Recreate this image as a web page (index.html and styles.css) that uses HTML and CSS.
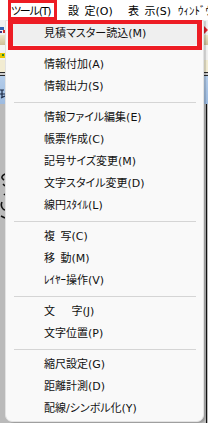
FILE: index.html
```html
<!DOCTYPE html>
<html lang="ja">
<head>
<meta charset="utf-8">
<title>ツールメニュー</title>
<link rel="stylesheet" href="styles.css">
</head>
<body>
<div class="app">
  <div class="menubar">
    <span class="mb mb-tool">ツール(T)</span>
    <span class="mb mb-set">設&#x2002;定(O)</span>
    <span class="mb mb-view">表&#x2002;示(S)</span>
    <span class="mb mb-win">ｳｨﾝﾄﾞｳ(W)</span>
  </div>
  <div class="tb tb1">
    <svg class="ico" width="6" height="8" viewBox="0 0 6 8"><rect x="0" y="1" width="4" height="3" fill="#2f5fb3"/><rect x="3" y="4" width="3" height="3" fill="#d03030"/><rect x="0" y="5" width="2" height="2" fill="#3a3a8a"/></svg>
    <svg class="arrow" width="4" height="8" viewBox="0 0 4 8"><path d="M0 0 L4 4 L0 8 Z" fill="#e0202a"/></svg>
  </div>
  <div class="tb tb2"></div>
  <div class="tb tb3"></div>
  <div class="tb tb4">
    <svg class="ico" width="6" height="7" viewBox="0 0 6 7"><rect x="0" y="1" width="5" height="5" fill="#e8c800"/><rect x="2" y="2" width="2" height="2" fill="#2a8a2a"/></svg>
  </div>
  <div class="tb tb5"></div>
  <div class="dbl"></div>
  <div class="band">
    <svg class="glyph" width="6" height="12" viewBox="0 0 6 12"><path d="M0 2 H4 M2 2 V10 M0 6 H5 M1 10 L5 8" stroke="#1c2a44" stroke-width="1.2" fill="none"/></svg>
  </div>
  <div class="canvas">
    <svg class="stroke" width="6" height="50" viewBox="0 0 6 50"><path d="M5 2 C1 4 1 6 4 8 M3 12 L5 14 M4 22 L5 23 M2 30 C0 34 3 38 5 38 M1 44 L5 46" stroke="#111" stroke-width="1.6" fill="none"/></svg>
    <div class="rline"></div>
  </div>
</div>

<div class="dropdown">
  <div class="item hot">見積マスター読込(M)</div>
  <div class="sep"></div>
  <div class="item">情報付加(A)</div>
  <div class="item">情報出力(S)</div>
  <div class="sep"></div>
  <div class="item">情報ファイル編集(E)</div>
  <div class="item">帳票作成(C)</div>
  <div class="item">記号サイズ変更(M)</div>
  <div class="item">文字スタイル変更(D)</div>
  <div class="item">線円ｽﾀｲﾙ(L)</div>
  <div class="sep"></div>
  <div class="item">複&#x2002;写(C)</div>
  <div class="item">移&#x2002;動(M)</div>
  <div class="item">ﾚｲﾔｰ操作(V)</div>
  <div class="sep"></div>
  <div class="item">文&#x2002;&#x2002;&#x2002;字(J)</div>
  <div class="item">文字位置(P)</div>
  <div class="sep"></div>
  <div class="item">縮尺設定(G)</div>
  <div class="item">距離計測(D)</div>
  <div class="item">配線/シンボル化(Y)</div>
</div>

<div class="mark mark-tool"></div>
<div class="mark mark-item"></div>
</body>
</html>
```

FILE: styles.css
```css
html, body {
  margin: 0;
  padding: 0;
}
body {
  width: 208px;
  height: 423px;
  overflow: hidden;
  position: relative;
  font-family: "DejaVu Sans", "Noto Sans CJK JP", sans-serif;
  font-size: 11px;
  font-feature-settings: "palt";
  color: #000;
  background: #b9b9b9;
}

.app {
  display: flex;
  flex-direction: column;
  height: 423px;
}

.menubar {
  height: 20px;
  flex: none;
  background: #fff;
  display: flex;
  white-space: nowrap;
  overflow: hidden;
  padding-left: 11px;
}
.mb {
  flex: none;
  line-height: 23px;
}
.mb-tool { width: 57px; letter-spacing: -1.2px; }
.mb-set { width: 60px; }
.mb-view { width: 50px; }

.tb {
  flex: none;
  display: flex;
  align-items: center;
  justify-content: space-between;
}
.tb1 {
  height: 15px;
  background: #f0f0f0;
  align-items: flex-end;
  padding-bottom: 1px;
  box-sizing: border-box;
}
.tb2 {
  height: 10px;
  background: linear-gradient(#ece4c8, #cfc09a);
}
.tb3 {
  height: 5px;
  background: #f4f4f4;
}
.tb4 {
  height: 10px;
  background: #f0f0f0;
}
.tb5 {
  height: 12px;
  background: #f2ecd2;
}
.dbl {
  flex: none;
  height: 2px;
  border-top: 1px solid #2a2a2a;
  border-bottom: 1px solid #2a2a2a;
  background: #cfcfcf;
}
.band {
  flex: none;
  height: 28px;
  background: linear-gradient(#b4cdea, #9dbbe0);
  display: flex;
  align-items: flex-end;
  padding-bottom: 4px;
  box-sizing: border-box;
}
.canvas {
  flex: 1;
  background: #bababa;
  display: flex;
  justify-content: space-between;
  align-items: flex-start;
}
.canvas .stroke {
  margin-top: 68px;
}
.rline {
  width: 1px;
  height: 100%;
  margin-right: 1px;
  background: #111;
}

/* dropdown menu overlay */
.dropdown {
  position: absolute;
  left: 5px;
  top: 20px;
  width: 199px;
  height: 402px;
  box-sizing: border-box;
  background: #f9f9f9;
  border: 1px solid #e2e2e2;
  border-radius: 0 0 7px 7px;
  box-shadow: 2px 1px 1px rgba(0, 0, 0, 0.16);
  padding-top: 2px;
  white-space: nowrap;
}
.item {
  height: 22px;
  line-height: 22px;
  padding-left: 38px;
  margin: 0 4px 0 0;
  color: #111;
}
.item.hot {
  background: #efefef;
  margin: 0 5px 0 4px;
  padding-left: 34px;
  border-radius: 4px;
}
.sep {
  height: 9px;
  box-sizing: border-box;
  padding-top: 4px;
  margin: 0 7px 0 8px;
}
.sep::after {
  content: "";
  display: block;
  height: 1px;
  background: #d5d5d5;
}

/* red annotation boxes */
.mark {
  position: absolute;
  box-sizing: border-box;
  border: 3px solid #ed1c24;
}
.mark-tool {
  left: 8px;
  top: 0;
  width: 49px;
  height: 20px;
}
.mark-item {
  left: 8px;
  top: 20px;
  width: 194px;
  height: 30px;
  border-width: 4px 5px;
}
```
